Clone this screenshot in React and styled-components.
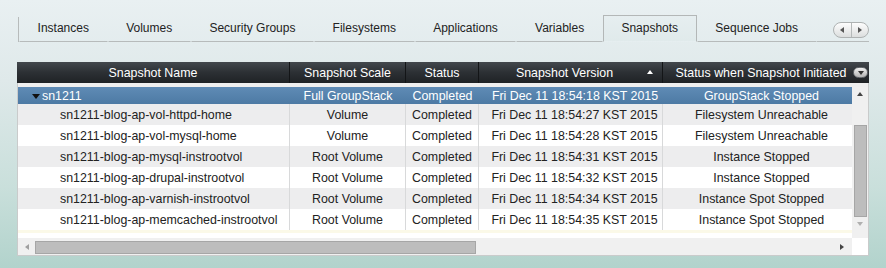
import React from "react";
import styled, { createGlobalStyle } from "styled-components";

const GlobalStyle = createGlobalStyle`
  html, body {
    margin: 0;
    padding: 0;
  }
  body {
    font-family: "Liberation Sans", Arial, sans-serif;
  }
`;

const TABS = [
  "Instances",
  "Volumes",
  "Security Groups",
  "Filesystems",
  "Applications",
  "Variables",
  "Snapshots",
  "Sequence Jobs",
];

const GROUP = {
  name: "sn1211",
  scale: "Full GroupStack",
  status: "Completed",
  version: "Fri Dec 11 18:54:18 KST 2015",
  initiated: "GroupStack Stopped",
};

const ROWS = [
  ["sn1211-blog-ap-vol-httpd-home", "Volume", "18:54:27", "Filesystem Unreachable"],
  ["sn1211-blog-ap-vol-mysql-home", "Volume", "18:54:28", "Filesystem Unreachable"],
  ["sn1211-blog-ap-mysql-instrootvol", "Root Volume", "18:54:31", "Instance Stopped"],
  ["sn1211-blog-ap-drupal-instrootvol", "Root Volume", "18:54:32", "Instance Stopped"],
  ["sn1211-blog-ap-varnish-instrootvol", "Root Volume", "18:54:34", "Instance Spot Stopped"],
  ["sn1211-blog-ap-memcached-instrootvol", "Root Volume", "18:54:35", "Instance Spot Stopped"],
];

function App() {
  return (
    <Page>
      <GlobalStyle />
      <TabBar>
        {TABS.map((t) => (
          <Tab key={t} $active={t === "Snapshots"}>
            {t}
          </Tab>
        ))}
        <TabFiller>
          <Scroller>
            <ScrollHalf>
              <Arrow $dir="left" $color="#555" />
            </ScrollHalf>
            <ScrollHalf $divider>
              <Arrow $dir="right" $color="#555" />
            </ScrollHalf>
          </Scroller>
        </TabFiller>
      </TabBar>

      <Panel>
        <Header>
          <HeadCell>Snapshot Name</HeadCell>
          <HeadCell>Snapshot Scale</HeadCell>
          <HeadCell>Status</HeadCell>
          <HeadCell $padRight={12}>
            Snapshot Version
            <SortMark>
              <Arrow $dir="up" $color="#fff" />
            </SortMark>
          </HeadCell>
          <HeadCell $padLeft={7} $last>
            Status when Snapshot Initiated
          </HeadCell>
          <MenuCell>
            <MenuButton>
              <Arrow $dir="down" $color="#333" />
            </MenuButton>
          </MenuCell>
        </Header>

        <Body>
          <Main>
            <Rows>
              <Row $group>
                <Cell $align="flex-start" $padLeft={14} $plain>
                  <Toggle>
                    <Arrow $dir="down" $color="#111" $size={4} />
                  </Toggle>
                  {GROUP.name}
                </Cell>
                <Cell $plain>{GROUP.scale}</Cell>
                <Cell $plain>{GROUP.status}</Cell>
                <Cell $plain $padLeft={8}>{GROUP.version}</Cell>
                <Cell $plain $padLeft={8}>{GROUP.initiated}</Cell>
              </Row>
              {ROWS.map(([name, scale, time, initiated], i) => (
                <Row key={name} $shade={i % 2 === 0}>
                  <Cell $align="flex-start" $padLeft={42}>
                    {name}
                  </Cell>
                  <Cell>{scale}</Cell>
                  <Cell>Completed</Cell>
                  <Cell $padLeft={8}>{`Fri Dec 11 ${time} KST 2015`}</Cell>
                  <Cell $padLeft={8} $plain>
                    {initiated}
                  </Cell>
                </Row>
              ))}
              <Cream />
            </Rows>
            <VScroll>
              <ArrowBox>
                <Arrow $dir="up" $color="#444" />
              </ArrowBox>
              <VThumb />
              <ArrowBox $bottom>
                <Arrow $dir="down" $color="#b0b0b0" />
              </ArrowBox>
            </VScroll>
          </Main>
          <Bottom>
            <HScroll>
              <HArrowBox $w={17}>
                <Arrow $dir="left" $color="#a0a0a0" />
              </HArrowBox>
              <HThumb />
              <HArrowBox $w={20} $end>
                <Arrow $dir="right" $color="#444" />
              </HArrowBox>
            </HScroll>
            <Corner />
          </Bottom>
        </Body>
      </Panel>
    </Page>
  );
}

export default App;

const Page = styled.div`
  box-sizing: border-box;
  width: 886px;
  height: 268px;
  padding: 15px 17px 0;
  overflow: hidden;
  background: linear-gradient(
    180deg,
    #e9f0f2 0%,
    #dfe9ea 30%,
    #c9dfdb 70%,
    #b2d3cc 100%
  );
`;

const TabBar = styled.div`
  display: flex;
  align-items: stretch;
  height: 27px;
`;

const Tab = styled.div`
  box-sizing: border-box;
  padding: 0 17.6px;
  line-height: 25px;
  font-size: 12px;
  color: #222;
  white-space: nowrap;
  border: 1px solid transparent;
  border-bottom: 1px solid #b7bbbb;
  &:first-child {
    margin-left: 2px;
    box-shadow: -2px 1px 0 -1px #b7bbbb;
  }
  ${(p) =>
    p.$active &&
    `
    border-color: #b3b7b7;
    border-bottom-color: transparent;
    background: linear-gradient(180deg, #e6eef0, #e0eaeb);
  `}
`;

const TabFiller = styled.div`
  flex: 1;
  display: flex;
  justify-content: flex-end;
  align-items: flex-end;
  padding-bottom: 3px;
  border-bottom: 1px solid #b7bbbb;
`;

const Scroller = styled.div`
  box-sizing: border-box;
  display: flex;
  width: 36px;
  height: 16px;
  border: 1px solid #aeb2b2;
  border-radius: 8px;
  background: linear-gradient(180deg, #fdfdfd, #dcdede);
  overflow: hidden;
`;

const ScrollHalf = styled.div`
  flex: 1;
  display: flex;
  align-items: center;
  justify-content: center;
  border-left: ${(p) => (p.$divider ? "1px solid #b5b9b9" : "none")};
`;

const Arrow = styled.span`
  display: inline-block;
  width: 0;
  height: 0;
  border-style: solid;
  ${({ $dir, $color, $size = 3 }) => {
    const s = $size;
    const h = $size + 1;
    if ($dir === "up")
      return `border-width: 0 ${s}px ${h}px ${s}px; border-color: transparent transparent ${$color} transparent;`;
    if ($dir === "down")
      return `border-width: ${h}px ${s}px 0 ${s}px; border-color: ${$color} transparent transparent transparent;`;
    if ($dir === "left")
      return `border-width: ${s}px ${h}px ${s}px 0; border-color: transparent ${$color} transparent transparent;`;
    return `border-width: ${s}px 0 ${s}px ${h}px; border-color: transparent transparent transparent ${$color};`;
  }}
`;

const Panel = styled.div`
  margin-top: 20px;
  width: 852px;
  font-size: 12.4px;
`;

const Header = styled.div`
  display: grid;
  grid-template-columns: 273px 116px 73px 184px 189px 17px;
  height: 21px;
  background: linear-gradient(180deg, #43484d 0%, #2c3034 50%, #1f2225 100%);
  color: #fff;
`;

const HeadCell = styled.div`
  position: relative;
  box-sizing: border-box;
  display: flex;
  align-items: center;
  justify-content: center;
  padding-left: ${(p) => p.$padLeft || 0}px;
  padding-right: ${(p) => p.$padRight || 0}px;
  border-right: ${(p) => (p.$last ? "none" : "1px solid #131517")};
  white-space: nowrap;
`;

const SortMark = styled.span`
  position: absolute;
  right: 9px;
  top: 8px;
  display: flex;
`;

const MenuCell = styled.div`
  display: flex;
  align-items: center;
  justify-content: flex-end;
  padding-right: 1px;
`;

const MenuButton = styled.div`
  box-sizing: border-box;
  width: 15px;
  height: 11px;
  border-radius: 6px;
  display: flex;
  align-items: center;
  justify-content: center;
  background: linear-gradient(180deg, #f0f0f0, #b4b4b4);
  border: 1px solid #6a6e72;
`;

const Body = styled.div`
  border: 1px solid #c9cbcb;
  border-top: none;
  background: #efefef;
  padding-top: 4px;
`;

const Main = styled.div`
  display: flex;
`;

const Rows = styled.div`
  width: 834px;
  background: #fff;
`;

const Row = styled.div`
  display: grid;
  grid-template-columns: 272px 116px 73px 184px 189px;
  height: ${(p) => (p.$group ? 17 : 21)}px;
  color: ${(p) => (p.$group ? "#fff" : "#222")};
  background: ${(p) =>
    p.$group
      ? "linear-gradient(180deg, #5f8bb5 0%, #4d7aa4 100%)"
      : p.$shade
      ? "#ededee"
      : "#fff"};
`;

const Cell = styled.div`
  box-sizing: border-box;
  display: flex;
  align-items: center;
  justify-content: ${(p) => p.$align || "center"};
  padding-left: ${(p) => p.$padLeft || 0}px;
  border-right: ${(p) => (p.$plain ? "none" : "1px solid #d8d9da")};
  white-space: nowrap;
  overflow: hidden;
`;

const Toggle = styled.span`
  display: inline-flex;
  width: 10px;
  margin-top: 1px;
`;

const Cream = styled.div`
  height: 3px;
  background: #fbf9e8;
`;

const VScroll = styled.div`
  width: 16px;
  display: flex;
  flex-direction: column;
  align-items: center;
  background: #f0f0f0;
`;

const ArrowBox = styled.div`
  height: 13px;
  display: flex;
  align-items: center;
  justify-content: center;
  margin-top: ${(p) => (p.$bottom ? "auto" : "0")};
  margin-bottom: ${(p) => (p.$bottom ? "8px" : "0")};
`;

const VThumb = styled.div`
  box-sizing: border-box;
  margin-top: 25px;
  margin-left: 1px;
  width: 13px;
  height: 92px;
  background: #bdbdbd;
  border: 1px solid #a6a6a6;
`;

const Bottom = styled.div`
  display: flex;
  height: 17px;
`;

const HScroll = styled.div`
  width: 834px;
  display: flex;
  align-items: center;
  background: #f0f0f0;
`;

const HArrowBox = styled.div`
  width: ${(p) => p.$w}px;
  height: 100%;
  display: flex;
  align-items: center;
  justify-content: center;
  margin-left: ${(p) => (p.$end ? "auto" : "0")};
`;

const HThumb = styled.div`
  box-sizing: border-box;
  width: 441px;
  height: 13px;
  margin-top: 2px;
  background: #bdbdbd;
  border: 1px solid #a6a6a6;
`;

const Corner = styled.div`
  flex: 1;
  background: #fff;
`;
